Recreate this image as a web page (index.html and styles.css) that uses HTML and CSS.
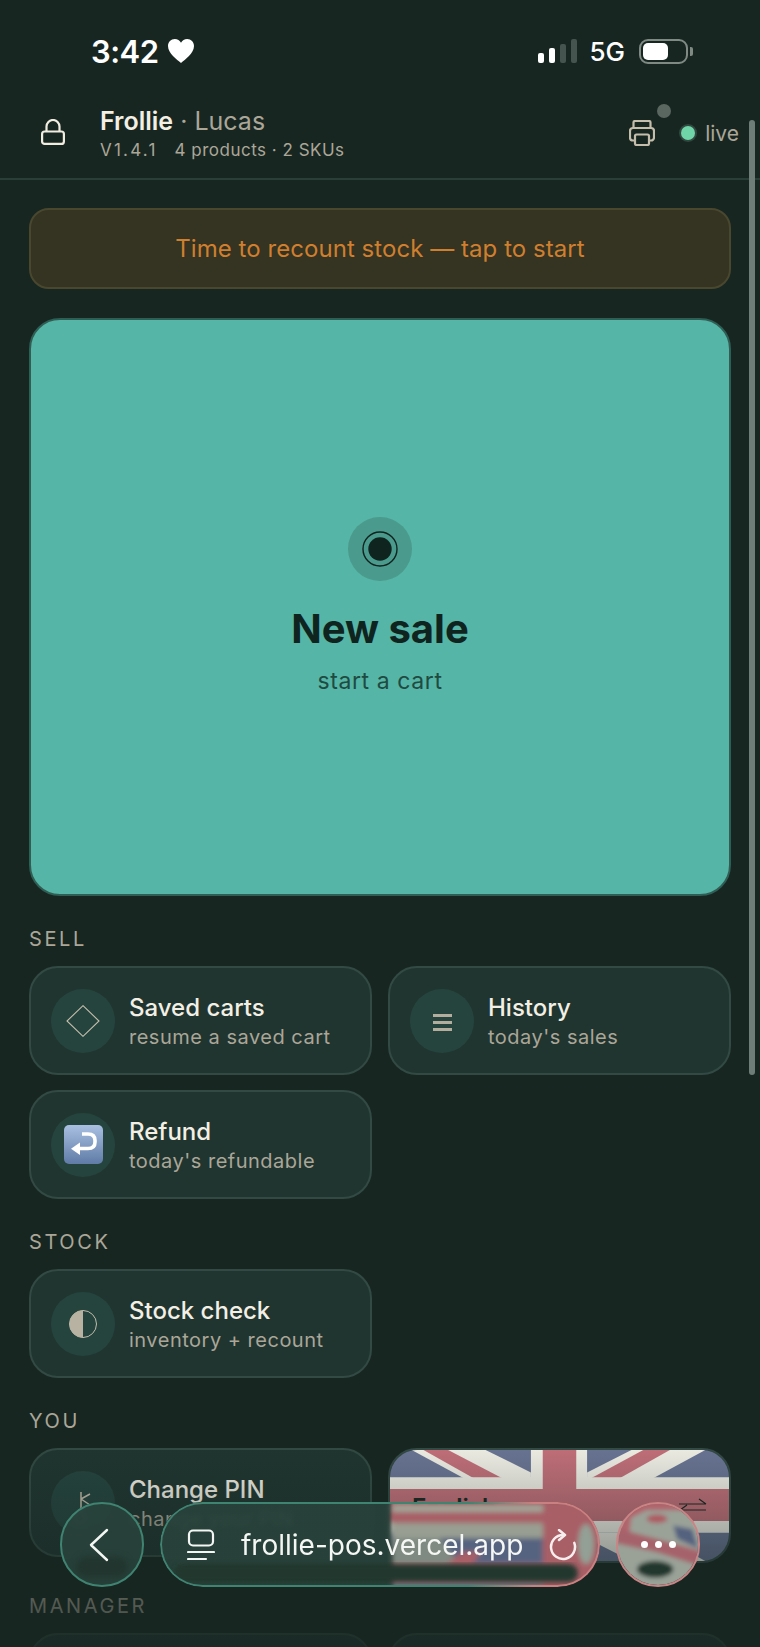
FILE: index.html
```html
<!DOCTYPE html>
<html lang="en">
<head>
    <meta charset="UTF-8">
    <meta name="viewport" content="width=device-width, initial-scale=1.0">
    <title>Frollie POS</title>
    <link rel="stylesheet" href="styles.css">
</head>
<body>
    <div class="screen">
        <!-- Status bar -->
        <div class="status-bar">
            <div class="status-left">
                <span class="clock">3:42</span>
                <svg class="heart" viewBox="0 0 26 24"><path d="M13 24C9 20.500 0 14.500 0 7C0 3 3 0 6.800 0C9.500 0 11.800 1.400 13 3.700C14.200 1.400 16.500 0 19.200 0C23 0 26 3 26 7C26 14.500 17 20.500 13 24Z"/></svg>
            </div>
            <div class="status-right">
                <div class="signal">
                    <span class="bar bar-1"></span>
                    <span class="bar bar-2"></span>
                    <span class="bar bar-3 off"></span>
                    <span class="bar bar-4 off"></span>
                </div>
                <span class="network">5G</span>
                <div class="battery"><span class="battery-level"></span></div>
                <span class="battery-tip"></span>
            </div>
        </div>

        <!-- Top bar -->
        <header class="topbar">
            <svg class="lock" viewBox="0 0 24 26" fill="none" stroke="#f1ece0" stroke-width="2.200">
                <rect x="1.100" y="12.500" width="21.800" height="12.400" rx="2.500"/>
                <path d="M5.500 12.500V7.500a6.500 6.500 0 0 1 13 0V12.500"/>
            </svg>
            <div class="topbar-text">
                <div class="shop-line"><strong>Frollie</strong> · Lucas</div>
                <div class="meta-line"><span class="version">V1.4.1</span><span>4 products · 2 SKUs</span></div>
            </div>
            <div class="topbar-right">
                <span class="printer-wrap">
                    <svg class="printer" viewBox="0 0 26 26" fill="none" stroke="#c5bdac" stroke-width="2.200" stroke-linejoin="round">
                        <path d="M4.500 8V2.500a1.500 1.500 0 0 1 1.500-1.500h14a1.500 1.500 0 0 1 1.500 1.500V8"/>
                        <path d="M6 20.500H4a3 3 0 0 1-3-3V11a3 3 0 0 1 3-3h18a3 3 0 0 1 3 3v6.500a3 3 0 0 1-3 3h-2"/>
                        <rect x="6" y="14.500" width="14" height="10.500" rx="1.500"/>
                    </svg>
                    <span class="printer-dot"></span>
                </span>
                <span class="live-dot"></span>
                <span class="live-text">live</span>
            </div>
        </header>

        <main class="content">
            <div class="banner">Time to recount stock — tap to start</div>

            <div class="hero">
                <div class="hero-icon">
                    <svg width="36" height="36" viewBox="0 0 36 36" fill="#10241f"><circle cx="18" cy="18" r="17" fill="none" stroke="#10241f" stroke-width="1.400"/><circle cx="18" cy="18" r="11.700"/></svg>
                </div>
                <div class="hero-title">New sale</div>
                <div class="hero-sub">start a cart</div>
            </div>

            <section class="section">
                <h2>SELL</h2>
                <div class="card-grid">
                    <div class="card">
                        <div class="card-icon">
                            <svg width="34" height="32" viewBox="0 0 34 32" fill="none" stroke="#c5bdac" stroke-width="1.100"><path d="M17 .7L33 16L17 31.300L1 16Z"/></svg>
                        </div>
                        <div class="card-text">
                            <div class="card-title">Saved carts</div>
                            <div class="card-sub">resume a saved cart</div>
                        </div>
                    </div>
                    <div class="card">
                        <div class="card-icon">
                            <svg class="menu-icon" width="19" height="17" viewBox="0 0 19 17" fill="#b3ad9e"><rect y="0" width="19" height="3"/><rect y="7" width="19" height="3"/><rect y="14" width="19" height="3"/></svg>
                        </div>
                        <div class="card-text">
                            <div class="card-title">History</div>
                            <div class="card-sub">today's sales</div>
                        </div>
                    </div>
                    <div class="card">
                        <div class="card-icon">
                            <svg width="39" height="39" viewBox="0 0 39 39">
                                <defs><linearGradient id="emojiBlue" x1="0" y1="0" x2="0" y2="1"><stop offset="0" stop-color="#a9c0e2"/><stop offset="1" stop-color="#5f7ba6"/></linearGradient></defs>
                                <rect width="39" height="39" rx="5" fill="url(#emojiBlue)"/>
                                <path d="M18 9H24Q31 9 31 15.500V17Q31 23.500 24 23.500H14" fill="none" stroke="#fff" stroke-width="3.600"/>
                                <path d="M16 17.500V30L7 23.700Z" fill="#fff"/>
                            </svg>
                        </div>
                        <div class="card-text">
                            <div class="card-title">Refund</div>
                            <div class="card-sub">today's refundable</div>
                        </div>
                    </div>
                </div>
            </section>

            <section class="section">
                <h2>STOCK</h2>
                <div class="card-grid">
                    <div class="card">
                        <div class="card-icon">
                            <svg width="30" height="30" viewBox="0 0 30 30"><circle cx="15" cy="15" r="13.500" fill="none" stroke="#c5bdac" stroke-width="1"/><path d="M15 1.500A13.500 13.500 0 0 0 15 28.500Z" fill="#b8b2a2"/></svg>
                        </div>
                        <div class="card-text">
                            <div class="card-title">Stock check</div>
                            <div class="card-sub">inventory + recount</div>
                        </div>
                    </div>
                </div>
            </section>

            <section class="section">
                <h2>YOU</h2>
                <div class="card-grid">
                    <div class="card">
                        <div class="card-icon">
                            <svg class="key-icon" width="20" height="32" viewBox="0 0 20 32" fill="none" stroke="#c5bdac" stroke-width="1.500"><path d="M8 0V20M8 7L17 2M8 7L17 13"/><circle cx="7" cy="25.500" r="6"/></svg>
                        </div>
                        <div class="card-text">
                            <div class="card-title">Change PIN</div>
                            <div class="card-sub">change your PIN</div>
                        </div>
                    </div>
                    <div class="card card-flag">
                        <svg class="flag" viewBox="0 0 344 114" preserveAspectRatio="none">
                            <rect width="344" height="114" fill="#6a7595"/>
                            <!-- diagonals -->
                            <path d="M22 0H97L143 23V29H75Z" fill="#f2f1e8"/>
                            <path d="M34 0H59L114 29H85Z" fill="#c4707a"/>
                            <path d="M320 0H245L200 23V29H267Z" fill="#f2f1e8"/>
                            <path d="M284 0H257L204 29H233Z" fill="#c4707a"/>
                            <path d="M22 114H97L143 91V85H75Z" fill="#f2f1e8"/>
                            <path d="M320 114H245L200 91V85H267Z" fill="#f2f1e8"/>
                            <!-- cross -->
                            <path d="M0 28H143V0H200V28H344V85H200V114H143V85H0Z" fill="#f2f1e8"/>
                            <path d="M0 40H155V0H189V40H344V73H189V114H155V73H0Z" fill="#c4707a"/>
                        </svg>
                        <div class="flag-row">
                            <span class="flag-label">English</span>
                            <svg class="swap" width="28" height="18" viewBox="0 0 28 18" fill="none" stroke="#1a2622" stroke-width="1.200"><path d="M0 6H27M20 1L27 6M27 12H1M8 7L1 12L8 17"/></svg>
                        </div>
                    </div>
                </div>
            </section>

            <section class="section">
                <h2>MANAGER</h2>
                <div class="card-grid">
                    <div class="card"></div>
                    <div class="card"></div>
                </div>
            </section>
        </main>

        <div class="scrollbar"></div>
        <div class="bottom-fade"></div>

        <!-- Safari bottom toolbar, floats above the page -->
        <nav class="browser-bar">
            <div class="glass glass-round">
                <span class="glass-band"></span>
                <svg class="back-icon" width="20" height="34" viewBox="0 0 20 34" fill="none" stroke="#f3f6f3" stroke-width="2.400" stroke-linecap="round" stroke-linejoin="round"><path d="M18 2L2 17L18 32"/></svg>
            </div>
            <div class="glass glass-pill">
                <svg class="pill-refraction" viewBox="0 0 440 85" preserveAspectRatio="none">
                    <defs><filter id="softPill" x="-5%" y="-10%" width="110%" height="120%"><feGaussianBlur stdDeviation="2.600"/></filter></defs>
                    <g filter="url(#softPill)">
                        <path d="M232 0H440V85H232Z" fill="#a85f66"/>
                        <rect x="232" y="3" width="151" height="7" fill="#a0a598"/>
                        <rect x="232" y="21" width="151" height="15" fill="#989e92"/>
                        <rect x="232" y="36" width="151" height="26" fill="#7f8a82"/>
                        <path d="M280 36H383V62H300Z" fill="#566380"/>
                        <path d="M322 50H302L287 62H312Z" fill="#a85f66"/>
                        <ellipse cx="426" cy="42" rx="8" ry="20" fill="#93a095"/>
                        <rect x="232" y="80" width="151" height="5" fill="#6f7d86"/>
                    </g>
                    <rect x="14" y="62" width="404" height="18" rx="9" fill="#24382f" filter="url(#softPill)"/>
                </svg>
                <svg class="tabs-icon" width="28" height="32" viewBox="0 0 28 32" fill="none" stroke="#f3f6f3" stroke-width="2.200" stroke-linecap="round"><rect x="2" y="1.500" width="24" height="15" rx="4"/><path d="M1 23H27M1 30H19"/></svg>
                <span class="url">frollie-pos.vercel.app</span>
                <svg class="reload" width="28" height="32" viewBox="0 0 28 32" fill="none" stroke="#f6eeee" stroke-width="2.500" stroke-linecap="round" stroke-linejoin="round"><path d="M14 6A12 12 0 1 0 25.300 13.900"/><path d="M10 1L16 6L10 11"/></svg>
            </div>
            <div class="glass glass-more">
                <svg class="more-blobs" viewBox="0 0 84 84">
                    <defs><filter id="softMore" x="-10%" y="-10%" width="120%" height="120%"><feGaussianBlur stdDeviation="2.400"/></filter></defs>
                    <g filter="url(#softMore)">
                        <rect x="-6" y="-6" width="96" height="96" fill="#9aa298"/>
                        <path d="M-6 -6H90V6H30L14 14L12 30H-6Z" fill="#b0656c"/>
                        <path d="M-6 24L44 37L90 50V66L40 50L-6 40Z" fill="#a6626a"/>
                        <ellipse cx="41" cy="15" rx="11" ry="4.500" fill="#ad5a62"/>
                        <path d="M58 22L78 26L84 46L62 36Z" fill="#55627f"/>
                        <ellipse cx="39" cy="68" rx="19" ry="9" fill="#22382f"/>
                    </g>
                </svg>
                <span class="dots"><i></i><i></i><i></i></span>
            </div>
        </nav>
    </div>
</body>
</html>
```

FILE: styles.css
```css
:root {
    --bg: #182622;
    --card-bg: #203530;
    --card-border: #324a43;
    --icon-bg: #25443e;
    --text-strong: #f3efe4;
    --text-muted: #aba698;
    --teal: #55b5a6;
    --ink: #10241f;
}

* {
    box-sizing: border-box;
}

html,
body {
    margin: 0;
    height: 100%;
    overflow: hidden;
}

body {
    background-color: var(--bg);
    font-family: "Inter", "Liberation Sans", sans-serif;
    color: var(--text-strong);
}

.screen {
    position: relative;
    height: 1647px;
    overflow: hidden;
}

/* Status bar */
.status-bar {
    height: 100px;
    display: flex;
    align-items: flex-start;
    justify-content: space-between;
    padding: 32px 67px 0 91px;
}

.status-left {
    display: flex;
    align-items: center;
    gap: 9px;
    height: 38px;
}

.clock {
    font-size: 31px;
    font-weight: 600;
    color: #fff;
    letter-spacing: -0.5px;
}

.heart {
    width: 26px;
    height: 24px;
    fill: #fff;
}

.status-right {
    display: flex;
    align-items: center;
    height: 38px;
}

.signal {
    display: flex;
    align-items: flex-end;
    gap: 5px;
    height: 24px;
}

.bar {
    width: 6px;
    background-color: #fff;
    border-radius: 2px;
}

.bar.off {
    background-color: #45544f;
}

.bar-1 { height: 10px; }
.bar-2 { height: 15px; }
.bar-3 { height: 19px; }
.bar-4 { height: 24px; }

.network {
    margin-left: 12px;
    font-size: 26px;
    font-weight: 500;
    color: #fff;
}

.battery {
    margin-left: 14px;
    width: 49px;
    height: 25px;
    padding: 2px;
    border: 2px solid #7f8a85;
    border-radius: 9px;
}

.battery-level {
    display: block;
    width: 25px;
    height: 100%;
    background-color: #fff;
    border-radius: 5px;
}

.battery-tip {
    width: 3px;
    height: 9px;
    margin-left: 2px;
    background-color: #7f8a85;
    border-radius: 0 2px 2px 0;
}

/* Top bar */
.topbar {
    height: 80px;
    display: flex;
    align-items: flex-start;
    padding: 0 21px 0 41px;
    border-bottom: 2px solid #2b3f39;
}

.lock {
    width: 24px;
    height: 26px;
    margin-top: 19px;
}

.topbar-text {
    margin-left: 35px;
    flex: 1;
}

.shop-line {
    font-size: 25px;
    line-height: 30px;
    margin-top: 6px;
    color: var(--text-muted);
}

.shop-line strong {
    font-weight: 600;
    color: var(--text-strong);
}

.meta-line {
    margin-top: 3px;
    display: flex;
    gap: 17px;
    font-size: 17px;
    line-height: 22px;
    letter-spacing: 0.5px;
    color: var(--text-muted);
}

.version {
    letter-spacing: 2.200px;
}

.topbar-right {
    display: flex;
    align-items: center;
    height: 66px;
}

.printer-wrap {
    position: relative;
    display: flex;
}

.printer {
    width: 26px;
    height: 26px;
}

.printer-dot {
    position: absolute;
    top: -16px;
    left: 28px;
    width: 14px;
    height: 14px;
    border-radius: 50%;
    background-color: #5a6660;
}

.live-dot {
    margin-left: 26px;
    width: 14px;
    height: 14px;
    border-radius: 50%;
    background-color: #6fd4a8;
    box-shadow: 0 0 0 2px #31473f;
}

.live-text {
    margin-left: 10px;
    font-size: 21px;
    color: var(--text-muted);
}

/* Main content */
.content {
    padding: 28px 29px 0;
}

.banner {
    height: 81px;
    display: flex;
    align-items: center;
    justify-content: center;
    background-color: #353322;
    border: 2px solid #49482f;
    border-radius: 20px;
    color: #cf7f2e;
    font-size: 24px;
    letter-spacing: 0.05px;
}

.hero {
    margin-top: 29px;
    height: 578px;
    padding-bottom: 3px;
    display: flex;
    flex-direction: column;
    align-items: center;
    justify-content: center;
    background-color: var(--teal);
    border: 2px solid #2f5e55;
    border-radius: 31px;
    color: var(--ink);
}

.hero-icon {
    width: 64px;
    height: 64px;
    display: flex;
    align-items: center;
    justify-content: center;
    border-radius: 50%;
    background-color: #4a9a8d;
}

.hero-title {
    margin-top: 24px;
    font-size: 40px;
    font-weight: 700;
    line-height: 48px;
}

.hero-sub {
    margin-top: 14px;
    font-size: 23px;
    line-height: 28px;
    letter-spacing: 0.6px;
    color: #1f4a42;
}

/* Sections and cards */
.section {
    margin-top: 30px;
}

.section h2 {
    margin: 0 0 14px;
    font-size: 20px;
    font-weight: 400;
    line-height: 26px;
    letter-spacing: 2.600px;
    color: var(--text-muted);
}

.card-grid {
    display: grid;
    grid-template-columns: 1fr 1fr;
    gap: 15px 16px;
}

.card {
    height: 109px;
    display: flex;
    align-items: center;
    gap: 14px;
    padding: 0 20px;
    background-color: var(--card-bg);
    border: 2px solid var(--card-border);
    border-radius: 29px;
}

.card-icon {
    flex: none;
    width: 64px;
    height: 64px;
    display: flex;
    align-items: center;
    justify-content: center;
    border-radius: 50%;
    background-color: var(--icon-bg);
}

.card-text {
    padding-top: 1px;
}

.menu-icon {
    margin-top: 4px;
}

.key-icon {
    margin-top: 10px;
}

.card-title {
    font-size: 24px;
    font-weight: 500;
    line-height: 30px;
}

.card-sub {
    margin-top: 1px;
    font-size: 20px;
    line-height: 26px;
    letter-spacing: 0.5px;
    color: var(--text-muted);
}

.card-flag {
    position: relative;
    height: 115px;
    padding: 0 22px;
    overflow: hidden;
    border-color: #344a45;
}

.flag {
    position: absolute;
    inset: 0;
    width: 100%;
    height: 100%;
}

.flag-row {
    position: relative;
    flex: 1;
    display: flex;
    align-items: flex-start;
    justify-content: space-between;
    margin-top: 4px;
    color: #1a2622;
}

.flag-label {
    font-size: 24px;
    font-weight: 600;
}

.swap {
    margin: 5px 0 0 0;
}

/* Scrollbar */
.scrollbar {
    position: absolute;
    top: 120px;
    right: 5px;
    width: 6px;
    height: 955px;
    border-radius: 3px;
    background-color: #6f7d78;
}

/* Page fades out under the browser toolbar */
.bottom-fade {
    position: absolute;
    left: 0;
    right: 0;
    bottom: 0;
    height: 207px;
    background: linear-gradient(180deg, rgba(24, 38, 34, 0) 0, rgba(24, 38, 34, 0.75) 100%);
}

/* Browser bar */
.browser-bar {
    position: absolute;
    left: 60px;
    top: 1502px;
    display: flex;
    gap: 16px;
}

.glass {
    position: relative;
    height: 85px;
    display: flex;
    align-items: center;
    overflow: hidden;
    border-radius: 43px;
    -webkit-backdrop-filter: blur(2.500px);
    backdrop-filter: blur(2.500px);
}

.glass-round {
    width: 84px;
    justify-content: center;
    padding-right: 6px;
    background-color: rgba(40, 66, 59, 0.93);
    border: 2px solid #3f8371;
}

.glass-band {
    position: absolute;
    left: 14px;
    right: 14px;
    bottom: 8px;
    height: 20px;
    border-radius: 10px;
    background-color: #22362f;
    filter: blur(3px);
}

.back-icon {
    position: relative;
}

.glass-pill {
    width: 440px;
    padding: 0 23px 0 27px;
    background: linear-gradient(90deg, rgba(40, 66, 59, 0.93) 0, rgba(40, 66, 59, 0.93) 52%, rgba(40, 66, 59, 0) 53%);
}

/* two-tone rim: teal over the dark page, pink over the flag */
.glass-pill::after {
    content: "";
    position: absolute;
    inset: 0;
    padding: 2px;
    border-radius: inherit;
    background: linear-gradient(90deg, #3f8371 0, #3f8371 70%, #c98080 85%);
    -webkit-mask: linear-gradient(#000 0 0) content-box, linear-gradient(#000 0 0);
    -webkit-mask-composite: xor;
    mask-composite: exclude;
}

.pill-refraction {
    position: absolute;
    inset: 0;
    width: 100%;
    height: 100%;
}

.tabs-icon {
    position: relative;
    flex: none;
}

.url {
    position: relative;
    margin-left: 26px;
    flex: 1;
    font-size: 28px;
    color: #f5f7f4;
    white-space: nowrap;
}

.reload {
    position: relative;
    flex: none;
}

.glass-more {
    width: 84px;
    justify-content: center;
    border: 2px solid #c98585;
}

.more-blobs {
    position: absolute;
    inset: 0;
    width: 100%;
    height: 100%;
}

.dots {
    position: relative;
    display: flex;
    gap: 7px;
}

.dots i {
    width: 7px;
    height: 7px;
    border-radius: 50%;
    background-color: #fff;
}
```
